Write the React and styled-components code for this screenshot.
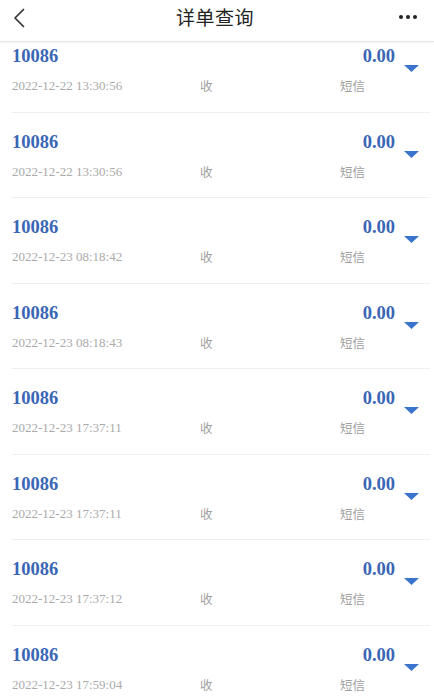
import React from 'react'
import styled, { createGlobalStyle } from 'styled-components'

const records = [
  { num: '10086', amount: '0.00', time: '2022-12-22 13:30:56', dir: '收', kind: '短信' },
  { num: '10086', amount: '0.00', time: '2022-12-22 13:30:56', dir: '收', kind: '短信' },
  { num: '10086', amount: '0.00', time: '2022-12-23 08:18:42', dir: '收', kind: '短信' },
  { num: '10086', amount: '0.00', time: '2022-12-23 08:18:43', dir: '收', kind: '短信' },
  { num: '10086', amount: '0.00', time: '2022-12-23 17:37:11', dir: '收', kind: '短信' },
  { num: '10086', amount: '0.00', time: '2022-12-23 17:37:11', dir: '收', kind: '短信' },
  { num: '10086', amount: '0.00', time: '2022-12-23 17:37:12', dir: '收', kind: '短信' },
  { num: '10086', amount: '0.00', time: '2022-12-23 17:59:04', dir: '收', kind: '短信' },
]

function App() {
  return (
    <Page>
      <GlobalStyle />
      <Header>
        <BackButton>
          <svg width="12" height="20" viewBox="0 0 12 20">
            <path d="M10.5 1.5 L2 10 L10.5 18.5" fill="none" stroke="#333" strokeWidth="1.7" strokeLinecap="round" strokeLinejoin="round" />
          </svg>
        </BackButton>
        <Title>详单查询</Title>
        <More>
          <Dot />
          <Dot />
          <Dot />
        </More>
      </Header>
      <Body>
        <List>
          {records.map((r, i) => (
            <Item key={i}>
              <Content>
                <TopLine>
                  <Number>{r.num}</Number>
                  <Amount>{r.amount}</Amount>
                </TopLine>
                <BottomLine>
                  <Time>{r.time}</Time>
                  <Meta>{r.dir}</Meta>
                  <Meta>{r.kind}</Meta>
                </BottomLine>
              </Content>
              <Arrow>
                <svg width="15" height="7" viewBox="0 0 15 7">
                  <path d="M0 0 L15 0 L7.5 7 Z" fill="#3a74cc" />
                </svg>
              </Arrow>
            </Item>
          ))}
        </List>
      </Body>
    </Page>
  )
}

export default App

const GlobalStyle = createGlobalStyle`
  html, body {
    margin: 0;
    padding: 0;
    background: #fff;
  }
  body {
    font-family: "Noto Sans CJK SC", "Noto Sans", sans-serif;
  }
`

const Page = styled.div`
  width: 434px;
  height: 700px;
  overflow: hidden;
  display: flex;
  flex-direction: column;
  background: #fff;
`

const Header = styled.div`
  flex: none;
  height: 42px;
  box-sizing: border-box;
  padding: 0 13px 8px 13px;
  display: flex;
  align-items: center;
  justify-content: space-between;
  border-bottom: 1px solid #e6e6e6;
  box-shadow: 0 1px 2px rgba(0, 0, 0, 0.05);
  position: relative;
  z-index: 1;
  background: #fff;
`

const BackButton = styled.div`
  width: 30px;
  display: flex;
  align-items: center;
  padding-top: 2px;
`

const Title = styled.div`
  font-size: 19px;
  color: #222;
  letter-spacing: 0.5px;
`

const More = styled.div`
  width: 30px;
  display: flex;
  justify-content: flex-end;
  gap: 3px;
  padding-right: 4px;
`

const Dot = styled.span`
  width: 4px;
  height: 4px;
  border-radius: 50%;
  background: #222;
`

const Body = styled.div`
  flex: 1;
  overflow: hidden;
`

const List = styled.div`
  margin-top: -15px;
`

const Item = styled.div`
  height: 85.5px;
  box-sizing: border-box;
  margin: 0 4px 0 12px;
  padding: 0 11px 0 0;
  display: flex;
  align-items: center;
  border-bottom: 1px solid #efefef;
`

const Content = styled.div`
  flex: 1;
  align-self: stretch;
  padding-top: 18px;
`

const TopLine = styled.div`
  display: flex;
  justify-content: space-between;
  align-items: center;
  height: 22px;
`

const Number = styled.span`
  font-family: "Liberation Serif", serif;
  font-weight: bold;
  font-size: 18.5px;
  line-height: 22px;
  color: #3a66b6;
`

const Amount = styled(Number)``

const BottomLine = styled.div`
  margin-top: 10px;
  display: grid;
  grid-template-columns: 188px 140px auto;
  align-items: center;
  height: 18px;
`

const Time = styled.span`
  font-family: "Liberation Serif", serif;
  font-size: 13px;
  line-height: 18px;
  color: #aaa;
`

const Meta = styled.span`
  font-family: "Noto Sans CJK SC", sans-serif;
  font-size: 12.5px;
  line-height: 18px;
  color: #a0a0a0;
`

const Arrow = styled.div`
  margin-left: 9px;
  width: 15px;
  display: flex;
  padding-bottom: 1px;
`
